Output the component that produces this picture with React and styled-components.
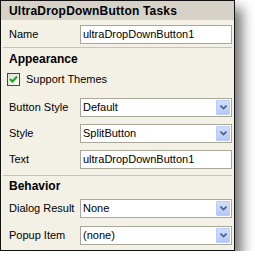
import styled, { createGlobalStyle } from 'styled-components'

const Global = createGlobalStyle`
body {
  margin: 0;
  background: #ffffff;
  font-family: "Liberation Sans", Arial, sans-serif;
}
`;

const Panel = styled.div`
width: 235px;
height: 251px;
box-sizing: border-box;
border: 1px solid #111;
background-color: #f3f1e6;
box-shadow: 7px 8px 12px rgba(0, 0, 0, 0.55);
display: flex;
flex-direction: column;
`;

const Header = styled.div`
height: 19px;
flex: none;
background-color: #d6d2c7;
padding-left: 8px;
display: flex;
align-items: center;
font-weight: bold;
font-size: 12px;
letter-spacing: 0.2px;
color: #000;
`;

const Row = styled.div`
height: ${p => p.h || 26}px;
margin-top: ${p => p.mt || 0}px;
flex: none;
display: grid;
grid-template-columns: 71px 152px;
align-items: center;
padding-left: 8px;
font-size: 11px;
color: #000;
`;

const Separator = styled.div`
height: 1px;
margin: ${p => p.mt || 0}px 2px 0 2px;
background-color: #c7c4b4;
flex: none;
`;

const SectionTitle = styled.div`
height: ${p => p.h || 20}px;
flex: none;
display: flex;
align-items: center;
padding-left: 8px;
font-weight: bold;
font-size: 12px;
`;

const CheckRow = styled.label`
height: 20px;
flex: none;
display: flex;
align-items: center;
gap: 6px;
padding-left: 6px;
font-size: 11px;
`;

const CheckBox = styled.span`
width: 11px;
height: 11px;
border: 1px solid #1c5180;
background: linear-gradient(135deg, #dcdcd5, #ffffff);
display: flex;
align-items: center;
justify-content: center;
`;

const Field = styled.div`
height: 19px;
box-sizing: border-box;
border: 1px solid #a9a797;
background: #fff;
display: flex;
align-items: center;
padding-left: 2px;
font-size: 11px;
`;

const FieldText = styled.span`
flex: 1;
`;

const DropButton = styled.span`
width: 14px;
height: 15px;
margin-right: 1px;
box-sizing: border-box;
border: 1px solid #b9cdf6;
border-radius: 1px;
background: linear-gradient(180deg, #d2defb, #b5c8f5);
display: flex;
align-items: center;
justify-content: center;
`;

function Chevron() {
  return (
    <svg width="7" height="5" viewBox="0 0 7 5">
      <path d="M0.5 0.5 L3.5 3.5 L6.5 0.5" fill="none" stroke="#4b5d85" strokeWidth="1.6" />
    </svg>
  );
}

function TextField({ label, value, mt }) {
  return (
    <Row mt={mt}>
      <span>{label}</span>
      <Field><FieldText>{value}</FieldText></Field>
    </Row>
  );
}

function Select({ label, value, mt }) {
  return (
    <Row mt={mt}>
      <span>{label}</span>
      <Field>
        <FieldText>{value}</FieldText>
        <DropButton><Chevron /></DropButton>
      </Field>
    </Row>
  );
}

export default function App() {
  return (
    <>
      <Global />
      <Panel>
        <Header>UltraDropDownButton Tasks</Header>
        <TextField label="Name" value="ultraDropDownButton1" mt={1} />
        <Separator mt={0} />
        <SectionTitle h={21}>Appearance</SectionTitle>
        <CheckRow>
          <CheckBox>
            <svg width="9" height="9" viewBox="0 0 9 9">
              <path d="M1 4 L3.5 6.5 L8 1.5" fill="none" stroke="#21a121" strokeWidth="2" />
            </svg>
          </CheckBox>
          Support Themes
        </CheckRow>
        <Select label="Button Style" value="Default" mt={5} />
        <Select label="Style" value="SplitButton" />
        <TextField label="Text" value="ultraDropDownButton1" />
        <Separator mt={3} />
        <SectionTitle h={19}>Behavior</SectionTitle>
        <Select label="Dialog Result" value="None" />
        <Select label="Popup Item" value="(none)" mt={1} />
      </Panel>
    </>
  );
}
